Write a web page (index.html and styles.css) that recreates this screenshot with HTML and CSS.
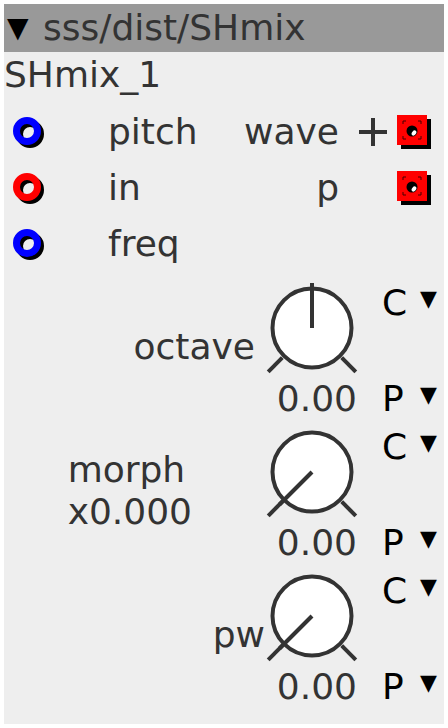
FILE: index.html
```html
<!DOCTYPE html>
<html lang="en">
<head>
    <meta charset="UTF-8">
    <title>sss/dist/SHmix</title>
    <link rel="stylesheet" href="styles.css">
</head>
<body>
    <div class="node">
        <div class="node-header"><span class="disclose">▼</span> sss/dist/SHmix</div>
        <div class="node-title">SHmix_1</div>

        <div class="port-row">
            <svg class="port-in" viewBox="0 0 32 32" width="32" height="32">
                <circle cx="17" cy="17" r="10.5" class="ring-shadow"/>
                <circle cx="14" cy="14" r="10.5" class="ring-blue"/>
            </svg>
            <span class="port-label">pitch</span>
            <span class="out-label">wave</span>
            <span class="plus-slot">
                <svg viewBox="0 0 30 30" width="30" height="30"><path d="M15 1 V29 M1 15 H29"/></svg>
            </span>
            <svg class="port-out" viewBox="0 0 36 36" width="36" height="36">
                <rect x="4" y="4" width="30" height="30" fill="#000"/>
                <rect x="0" y="0" width="30" height="30" fill="#f00"/>
                <path class="corner" d="M6 9 V6 H9 M21 6 H24 V9 M6 21 V24 H9 M21 24 H24 V21"/>
                <circle cx="15" cy="16" r="5.5" fill="#000"/>
                <ellipse cx="17" cy="18" rx="2" ry="2.8" transform="rotate(40 17 18)" fill="#fff"/>
            </svg>
        </div>
        <div class="port-row">
            <svg class="port-in" viewBox="0 0 32 32" width="32" height="32">
                <circle cx="17" cy="17" r="10.5" class="ring-shadow"/>
                <circle cx="14" cy="14" r="10.5" class="ring-red"/>
            </svg>
            <span class="port-label">in</span>
            <span class="out-label">p</span>
            <span class="plus-slot"></span>
            <svg class="port-out" viewBox="0 0 36 36" width="36" height="36">
                <rect x="4" y="4" width="30" height="30" fill="#000"/>
                <rect x="0" y="0" width="30" height="30" fill="#f00"/>
                <path class="corner" d="M6 9 V6 H9 M21 6 H24 V9 M6 21 V24 H9 M21 24 H24 V21"/>
                <circle cx="15" cy="16" r="5.5" fill="#000"/>
                <ellipse cx="17" cy="18" rx="2" ry="2.8" transform="rotate(40 17 18)" fill="#fff"/>
            </svg>
        </div>
        <div class="port-row port-row-last">
            <svg class="port-in" viewBox="0 0 32 32" width="32" height="32">
                <circle cx="17" cy="17" r="10.5" class="ring-shadow"/>
                <circle cx="14" cy="14" r="10.5" class="ring-blue"/>
            </svg>
            <span class="port-label">freq</span>
        </div>

        <div class="knob-row">
            <div class="knob-label">octave</div>
            <div class="knob-cell">
                <svg class="knob" viewBox="0 0 100 96" width="100" height="96">
                    <circle cx="50" cy="46" r="39.5"/>
                    <line x1="20.3" y1="75.7" x2="6.2" y2="89.8"/>
                    <line x1="79.7" y1="75.7" x2="93.8" y2="89.8"/>
                    <line x1="50" y1="46" x2="50" y2="1"/>
                </svg>
                <div class="knob-value">0.00</div>
            </div>
            <div class="cp">
                <div class="cp-line"><span class="cp-key">C</span><span class="caret">▼</span></div>
                <div class="cp-line"><span class="cp-key">P</span><span class="caret">▼</span></div>
            </div>
        </div>

        <div class="knob-row">
            <div class="knob-label stacked">
                <div>morph<br>x0.000</div>
            </div>
            <div class="knob-cell">
                <svg class="knob" viewBox="0 0 100 96" width="100" height="96">
                    <circle cx="50" cy="46" r="39.5"/>
                    <line x1="20.3" y1="75.7" x2="6.2" y2="89.8"/>
                    <line x1="79.7" y1="75.7" x2="93.8" y2="89.8"/>
                    <line x1="50" y1="46" x2="17.5" y2="78.5"/>
                </svg>
                <div class="knob-value">0.00</div>
            </div>
            <div class="cp">
                <div class="cp-line"><span class="cp-key">C</span><span class="caret">▼</span></div>
                <div class="cp-line"><span class="cp-key">P</span><span class="caret">▼</span></div>
            </div>
        </div>

        <div class="knob-row">
            <div class="knob-label tight">pw</div>
            <div class="knob-cell">
                <svg class="knob" viewBox="0 0 100 96" width="100" height="96">
                    <circle cx="50" cy="46" r="39.5"/>
                    <line x1="20.3" y1="75.7" x2="6.2" y2="89.8"/>
                    <line x1="79.7" y1="75.7" x2="93.8" y2="89.8"/>
                    <line x1="50" y1="46" x2="17.5" y2="78.5"/>
                </svg>
                <div class="knob-value">0.00</div>
            </div>
            <div class="cp">
                <div class="cp-line"><span class="cp-key">C</span><span class="caret">▼</span></div>
                <div class="cp-line"><span class="cp-key">P</span><span class="caret">▼</span></div>
            </div>
        </div>
    </div>
</body>
</html>
```
FILE: styles.css
```css
body {
    margin: 4px;
    background: #fff;
    font-family: "DejaVu Sans", sans-serif;
}
.node {
    background: #eee;
    height: 720px;
    color: #333;
    font-size: 36px;
    line-height: 42px;
}
.node-header {
    height: 48px;
    background: #999;
    display: flex;
    align-items: center;
    white-space: pre;
}
.disclose {
    color: #000;
    font-size: 28px;
    margin-left: 3px;
    margin-right: 3px;
}
.node-title {
    padding: 2px 0 8px 0;
}
.port-row {
    display: flex;
    align-items: center;
    height: 56px;
}
.port-row-last {
    margin-bottom: 10px;
}
.port-in {
    margin-left: 9px;
    margin-top: 2px;
    flex: none;
}
.port-in circle {
    fill: none;
    stroke-width: 7;
}
.ring-shadow { stroke: #000; }
.ring-blue { stroke: #00f; }
.ring-red { stroke: #f00; }
.port-label {
    margin-left: 63px;
    flex: 1;
}
.out-label {
    text-align: right;
}
.plus-slot {
    width: 58px;
    height: 30px;
    flex: none;
}
.plus-slot svg {
    display: block;
    margin-left: 19px;
}
.plus-slot path {
    stroke: #333;
    stroke-width: 4;
    fill: none;
}
.port-out {
    flex: none;
    margin-right: 11px;
    margin-top: 2px;
}
.corner {
    fill: none;
    stroke: #400;
    stroke-width: 1;
}
.knob-row {
    display: grid;
    grid-template-columns: 1fr 100px 82px;
    height: 144px;
}
.knob-label {
    height: 130px;
    display: flex;
    justify-content: flex-end;
    align-items: center;
    padding-right: 7px;
}
.knob-label.tight {
    padding-right: 0;
    margin-right: -3px;
}
.knob-label.stacked {
    padding-right: 70px;
}
.knob {
    display: block;
}
.knob circle {
    fill: #fff;
    stroke: #333;
    stroke-width: 4;
}
.knob line {
    stroke: #333;
    stroke-width: 4;
}
.knob-value {
    text-align: right;
    padding-right: 5px;
}
.cp {
    padding-left: 20px;
    display: flex;
    flex-direction: column;
    gap: 54px;
    color: #000;
}
.cp-line {
    display: flex;
    align-items: flex-start;
}
.cp-key {
    width: 38px;
}
.caret {
    font-size: 22px;
    line-height: 34px;
}
```
